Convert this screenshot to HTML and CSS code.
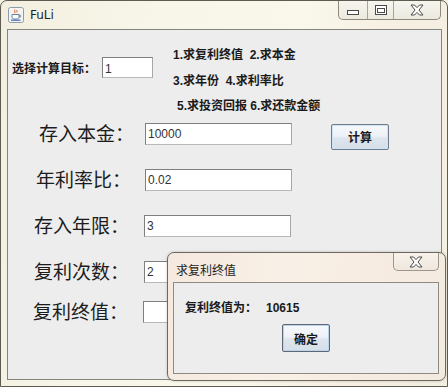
FILE: index.html
```html
<!DOCTYPE html>
<html lang="zh-CN">
<head>
  <meta charset="UTF-8" />
  <title>FuLi</title>
  <link rel="stylesheet" href="styles.css">
</head>
<body>
  <div class="window">
    <div class="titlebar">
      <svg class="app-icon" width="16" height="16" viewBox="0 0 16 16">
        <rect x="0.5" y="0.5" width="15" height="15" rx="2" fill="#f4f4f2" stroke="#8d9aab"/>
        <path d="M7 2.5c-1.5 1.2 1 2-0.3 3.6M9 3c-0.8 0.8 0.6 1.4-0.2 2.4" stroke="#e0582a" stroke-width="1" fill="none"/>
        <path d="M4 7.5h7v2.5c0 1.2-1 2-2 2H6c-1 0-2-0.8-2-2z" fill="#fff" stroke="#6d7f99"/>
        <path d="M11 8.2h1.2c0.8 0 0.8 1.8 0 1.8H11" stroke="#6d7f99" fill="none"/>
        <path d="M3 13.2h9.5" stroke="#3b6cc0" stroke-width="1.2"/>
      </svg>
      <span class="title">FuLi</span>
      <div class="controls">
        <span class="ctl ctl-min">
          <svg width="14" height="8" viewBox="0 0 14 8"><rect x="1.5" y="2.5" width="11" height="4" fill="#fff" stroke="#4a4a48"/></svg>
        </span>
        <span class="ctl ctl-max">
          <svg width="14" height="12" viewBox="0 0 14 12"><rect x="1.5" y="1.5" width="11" height="9" fill="#fff" stroke="#4a4a48"/><rect x="3.5" y="4.5" width="7" height="4" fill="none" stroke="#4a4a48"/></svg>
        </span>
        <span class="ctl ctl-close">
          <svg width="16" height="12" viewBox="0 0 16 12"><path d="M2 1h3.5L8 3.6 10.5 1H14l-4 5 4 5h-3.5L8 8.4 5.5 11H2l4-5z" fill="#fff" stroke="#4a4a48" stroke-linejoin="round"/></svg>
        </span>
      </div>
    </div>

    <div class="client">
      <div class="target">
        <div class="target-pick">
          <span class="small-label">选择计算目标：</span>
          <div class="field field-small">1</div>
        </div>
        <div class="options">
          <div>1.求复利终值&nbsp;&nbsp;2.求本金</div>
          <div>3.求年份&nbsp;&nbsp;4.求利率比</div>
          <div class="indent">5.求投资回报 6.求还款金额</div>
        </div>
      </div>

      <div class="form">
        <div class="row">
          <span class="label label-a">存入本金：</span>
          <div class="field">10000</div>
          <button class="btn btn-calc">计算</button>
        </div>
        <div class="row">
          <span class="label label-b">年利率比：</span>
          <div class="field">0.02</div>
        </div>
        <div class="row row-shift">
          <span class="label">存入年限：</span>
          <div class="field">3</div>
        </div>
        <div class="row row-wide">
          <span class="label">复利次数：</span>
          <div class="field">2</div>
        </div>
        <div class="row row-tight">
          <span class="label">复利终值：</span>
          <div class="field"></div>
        </div>
      </div>
    </div>

    <div class="dialog">
      <div class="dialog-bar">
        <span class="dialog-title">求复利终值</span>
        <span class="dialog-close">
          <svg width="16" height="12" viewBox="0 0 16 12"><path d="M2 1h3.5L8 3.6 10.5 1H14l-4 5 4 5h-3.5L8 8.4 5.5 11H2l4-5z" fill="#fff" stroke="#4a4a48" stroke-linejoin="round"/></svg>
        </span>
      </div>
      <div class="dialog-body">
        <div class="result">复利终值为：<span class="value">10615</span></div>
        <button class="btn btn-ok">确定</button>
      </div>
    </div>
  </div>
</body>
</html>
```

FILE: styles.css
```css
* {
  box-sizing: border-box;
}

body {
  margin: 0;
  background-color: #f4f1e2;
  font-family: "Liberation Sans", "Noto Sans CJK SC", sans-serif;
}

.window {
  position: relative;
  width: 448px;
  height: 387px;
  border: 1px solid #5d5b52;
  border-radius: 7px 7px 0 0;
  background: linear-gradient(100deg, #f3efe0 0%, #f7f6e8 30%, #f9f8ea 60%, #f6eee2 80%, #f2efe0 100%);
}

.titlebar {
  display: flex;
  align-items: flex-start;
  height: 28px;
  padding-left: 7px;
}

.app-icon {
  margin-top: 6px;
}

.title {
  margin-top: 6px;
  margin-left: 6px;
  font-family: "DejaVu Sans", "Noto Sans", sans-serif;
  font-size: 12px;
  line-height: 16px;
  color: #1e1e1e;
}

.controls {
  display: flex;
  margin-left: auto;
  margin-right: 6px;
  height: 19px;
  border: 1px solid #8c8a7c;
  border-top: none;
  border-radius: 0 0 5px 5px;
  background: linear-gradient(#f6f5ee, #eceadf);
  overflow: hidden;
}

.ctl {
  display: flex;
  align-items: center;
  justify-content: center;
  height: 100%;
}

.ctl-min {
  width: 29px;
  padding-top: 4px;
  border-right: 1px solid #a9a696;
}

.ctl-max {
  width: 26px;
  border-right: 1px solid #a9a696;
}

.ctl-close {
  width: 46px;
}

.client {
  height: 351px;
  margin: 0 5px 0 6px;
  border: 1px solid #86857c;
  background-color: #ededed;
}

.target {
  display: flex;
  align-items: flex-start;
  padding: 13px 0 0 4px;
}

.target-pick {
  display: flex;
  align-items: center;
  gap: 6px;
  margin-top: 14px;
}

.small-label,
.options,
.result {
  font-family: "Liberation Sans", "Noto Sans CJK SC", sans-serif;
  font-size: 12px;
  font-weight: bold;
  color: #1a1a1a;
}

.options {
  margin-left: 20px;
  line-height: 25.5px;
}

.options .indent {
  padding-left: 4px;
}

.field {
  width: 147px;
  height: 22px;
  padding: 3px 2px 0;
  border: 1px solid #7f7f7f;
  border-right-color: #a7a7a7;
  border-bottom-color: #b9b9b9;
  background-color: #fff;
  font-family: "Liberation Sans", sans-serif;
  font-size: 12px;
  line-height: 14px;
  color: #333;
}

.field-small {
  width: 51px;
  height: 21px;
  padding-top: 4px;
}

.form {
  padding: 3px 0 0 27px;
}

.row {
  display: flex;
  align-items: flex-start;
  height: 22px;
  margin-bottom: 24px;
}

.row-shift {
  margin-left: -1px;
}

.row-wide {
  margin-top: 4px;
  margin-left: -1px;
}

.row-tight {
  margin-top: -6px;
  margin-left: -2px;
}

.label {
  width: 110px;
  margin-top: -4px;
  font-family: "Noto Sans CJK SC", serif;
  font-size: 19px;
  line-height: 28px;
  color: #1c1c1c;
}

.label-a {
  padding-left: 4px;
}

.label-b {
  padding-left: 1px;
}

.btn {
  font-family: "Noto Sans CJK SC", sans-serif;
  font-size: 12px;
  font-weight: bold;
  color: #1a1a1a;
  border: 1px solid #707b8c;
  border-radius: 2px;
  background: linear-gradient(#f6f8fb 0%, #eef2f7 45%, #dde5ee 55%, #d6dee8 100%);
  box-shadow: inset 0 0 0 1px #cde3f6;
  padding: 0;
}

.btn-calc {
  width: 58px;
  height: 26px;
  margin-left: 39px;
  margin-top: 1px;
}

.dialog {
  position: absolute;
  left: 166px;
  top: 251px;
  width: 279px;
  height: 129px;
  border: 1px solid #6c685e;
  border-radius: 7px;
  background: linear-gradient(100deg, #f5e8df 0%, #f8f0e6 40%, #f7ece2 70%, #f3eadf 100%);
  box-shadow: 0 0 3px rgba(0, 0, 0, 0.2);
}

.dialog-bar {
  display: flex;
  align-items: flex-start;
  height: 29px;
  padding-left: 8px;
}

.dialog-title {
  margin-top: 9px;
  font-family: "Noto Sans CJK SC", sans-serif;
  font-size: 12px;
  line-height: 15px;
  color: #1e1e1e;
}

.dialog-close {
  display: flex;
  align-items: center;
  justify-content: center;
  width: 46px;
  height: 18px;
  margin-left: auto;
  margin-right: 6px;
  border: 1px solid #9b978a;
  border-top: none;
  border-radius: 0 0 5px 5px;
  background: linear-gradient(#f8f2ec, #efe7de);
}

.dialog-body {
  display: flex;
  flex-direction: column;
  align-items: center;
  height: 92px;
  margin: 0 6px 0 5px;
  border: 1px solid #8e8b82;
  background-color: #ededed;
}

.result {
  align-self: flex-start;
  margin: 17px 0 0 11px;
  line-height: 16px;
}

.result .value {
  margin-left: 9px;
}

.btn-ok {
  width: 48px;
  height: 28px;
  margin-top: 8px;
  border-color: #5f6775;
  box-shadow: inset 0 0 0 1px #b9d3ec;
}
```
